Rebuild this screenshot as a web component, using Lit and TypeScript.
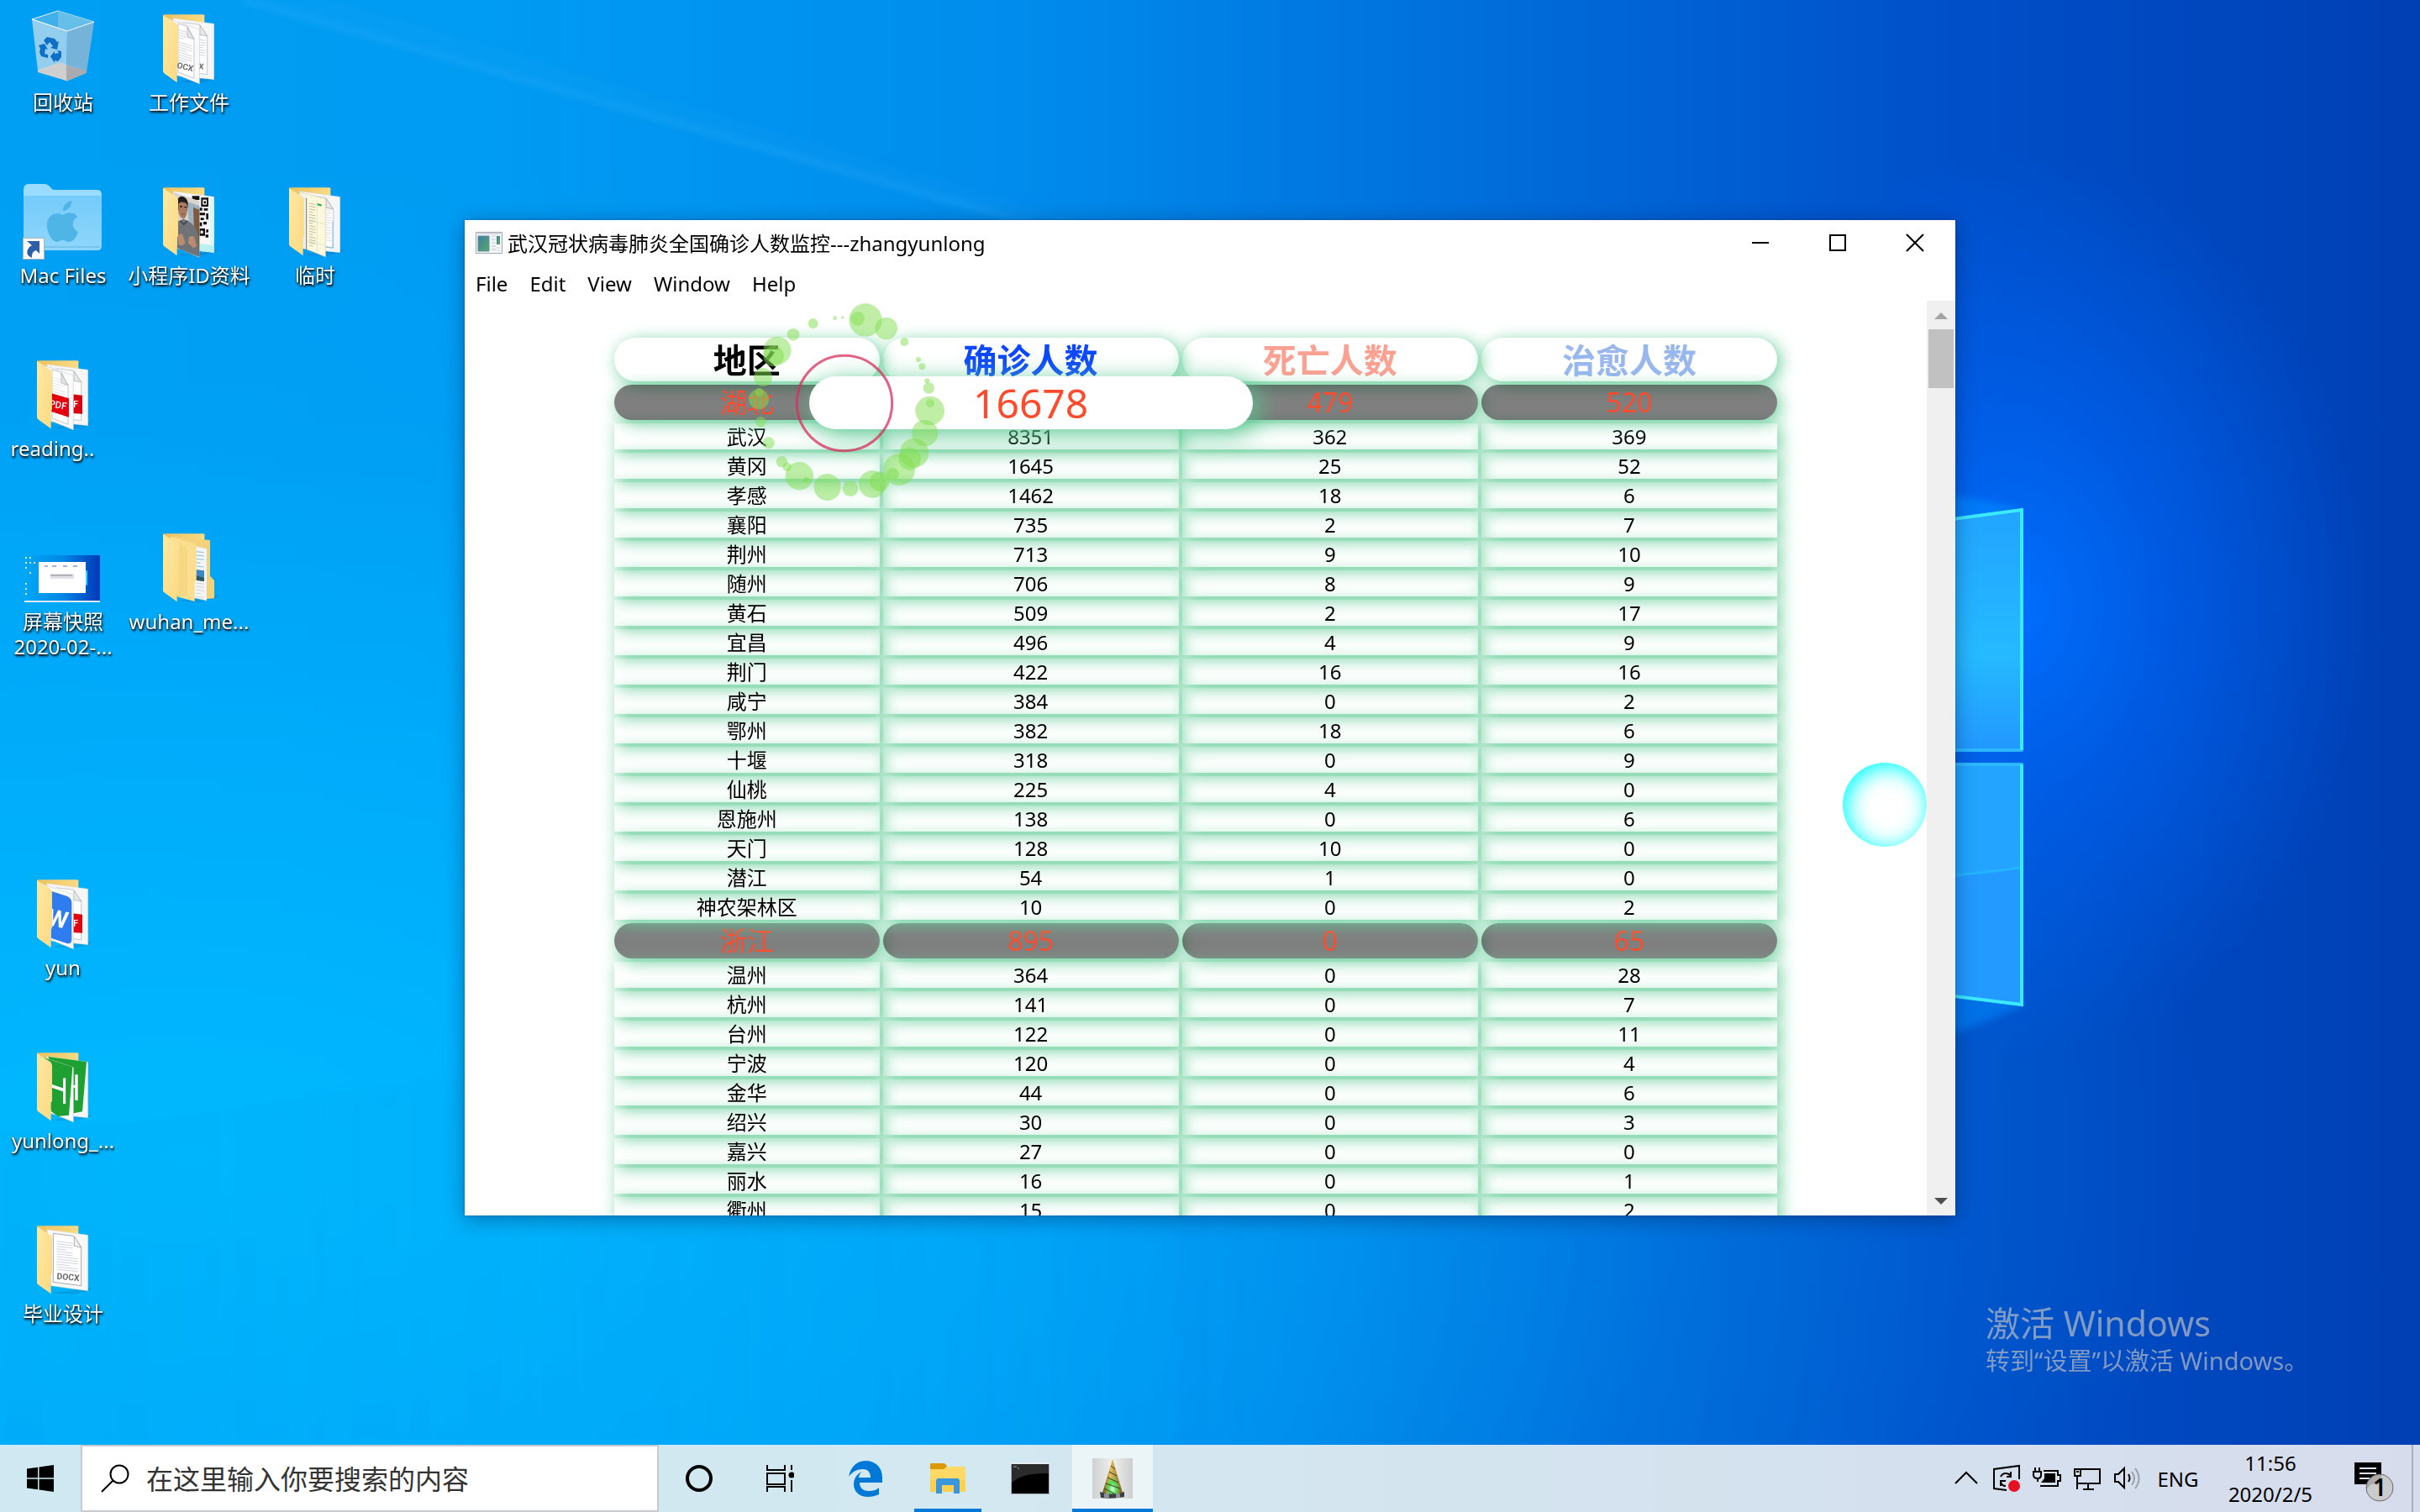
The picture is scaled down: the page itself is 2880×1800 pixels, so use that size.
import { LitElement, html, svg, css, nothing } from "lit";
import { customElement, property } from "lit/decorators.js";

/* ---------- data ---------- */

interface Region {
  name: string;
  counts: [number, number, number];
  summary?: boolean;
  hovered?: boolean;
}

const r = (name: string, a: number, b: number, c: number): Region => ({ name, counts: [a, b, c] });

const REGIONS: Region[] = [
  { name: "湖北", counts: [16678, 479, 520], summary: true, hovered: true },
  r("武汉", 8351, 362, 369),
  r("黄冈", 1645, 25, 52),
  r("孝感", 1462, 18, 6),
  r("襄阳", 735, 2, 7),
  r("荆州", 713, 9, 10),
  r("随州", 706, 8, 9),
  r("黄石", 509, 2, 17),
  r("宜昌", 496, 4, 9),
  r("荆门", 422, 16, 16),
  r("咸宁", 384, 0, 2),
  r("鄂州", 382, 18, 6),
  r("十堰", 318, 0, 9),
  r("仙桃", 225, 4, 0),
  r("恩施州", 138, 0, 6),
  r("天门", 128, 10, 0),
  r("潜江", 54, 1, 0),
  r("神农架林区", 10, 0, 2),
  { name: "浙江", counts: [895, 0, 65], summary: true },
  r("温州", 364, 0, 28),
  r("杭州", 141, 0, 7),
  r("台州", 122, 0, 11),
  r("宁波", 120, 0, 4),
  r("金华", 44, 0, 6),
  r("绍兴", 30, 0, 3),
  r("嘉兴", 27, 0, 0),
  r("丽水", 16, 0, 1),
  r("衢州", 15, 0, 2),
];

interface Shortcut {
  label: string;
  art: string;
  col: number;
  row: number;
}

const SHORTCUTS: Shortcut[] = [
  { label: "回收站", art: "bin", col: 1, row: 1 },
  { label: "工作文件", art: "docx2", col: 2, row: 1 },
  { label: "Mac Files", art: "mac", col: 1, row: 2 },
  { label: "小程序ID资料", art: "photo", col: 2, row: 2 },
  { label: "临时", art: "temp", col: 3, row: 2 },
  { label: "reading..\u00a0\u00a0\u00a0\u00a0", art: "pdf", col: 1, row: 3 },
  { label: "屏幕快照\n2020-02-...", art: "shot", col: 1, row: 4 },
  { label: "wuhan_me...", art: "nested", col: 2, row: 4 },
  { label: "yun", art: "wps", col: 1, row: 6 },
  { label: "yunlong_...", art: "hb", col: 1, row: 7 },
  { label: "毕业设计", art: "docx1", col: 1, row: 8 },
];

/* Particle ring, x / y / radius */
const PARTICLES: [number, number, number][] = [
  [480, 123, 59], [452, 118, 25], [554, 153, 40], [619, 201, 15], [669, 265, 9], [682, 289, 12],
  [700, 340, 9], [706, 366, 20], [710, 447, 52], [711, 420, 15], [692, 527, 47], [654, 598, 52],
  [638, 619, 40], [600, 657, 57], [578, 673, 22], [505, 709, 49], [530, 700, 35], [426, 725, 28],
  [344, 720, 48], [244, 680, 50], [268, 693, 10], [181, 629, 20], [200, 647, 16], [134, 562, 21],
  [106, 487, 19], [99, 406, 36], [101, 380, 15], [114, 327, 33], [165, 232, 50], [152, 252, 37],
  [222, 175, 22], [293, 135, 18], [371, 116, 7], [398, 114, 5],
];

/* ---------- icon art ---------- */

const textLines = (x: number, y: number, n: number, w: number, slope: number, gap = 9, color = "#b9bfd0") =>
  Array.from({ length: n }, (_, i) =>
    svg`<path d="M${x} ${y + i * gap}l${i % 4 === 3 ? w * 0.6 : w} ${i % 4 === 3 ? slope * 0.6 : slope}" stroke=${color} stroke-width="2"/>`);

const backPaper = svg`<path d="M168 293 314 313V512L182 498Z" fill="#f6f6f6" stroke="#d9d9d9" stroke-width="1"/>`;
const frontPaper = svg`<path d="M152 296 262 332V527L182 495Z" fill="#fbfbfb" stroke="#cfcfcf" stroke-width="2"/>`;

const backDoc = svg`
  <path d="M200 308 262 316 290 357V494L240 488" fill="#fff" stroke="#a9b1b6" stroke-width="2"/>
  <path d="M264 318V352L290 357Z" fill="#e9e9e9" stroke="#9aa4a8" stroke-width="2"/>`;
const frontDoc = svg`
  <path d="M186 312 218 322 243 368V508L186 486Z" fill="#fff" stroke="#a9b1b6" stroke-width="2"/>
  <path d="M219 324V360L243 368Z" fill="#e4e4e4" stroke="#9aa4a8" stroke-width="2"/>`;

const folderInner: Record<string, unknown> = {
  docx1: svg`
    <path d="M168 293 314 313V512L182 494Z" fill="#f8f8f8" stroke="#d4d4d4" stroke-width="1"/>
    <path d="M190 307 262 316 290 357V494L190 481Z" fill="#fff" stroke="#a9a9a9" stroke-width="3"/>
    <path d="M265 318V352L290 357Z" fill="#f2f2f2" stroke="#8f8f8f" stroke-width="2"/>
    ${textLines(202, 335, 6, 58, 7)} ${textLines(202, 390, 6, 76, 8)}
    <text class="tag" x="202" y="470" font-size="31" transform="rotate(5 202 470)">DOCX</text>`,
  docx2: svg`
    ${backPaper}${backDoc}
    ${textLines(264, 370, 7, 20, 3)}
    <text class="tag" x="259" y="474" font-size="28" transform="rotate(6 259 474)">X</text>
    ${frontPaper}${frontDoc}
    ${textLines(188, 335, 4, 28, 8)} ${textLines(188, 378, 8, 48, 15)}
    <text class="tag" x="180" y="470" font-size="30" transform="rotate(13 180 470)">OCX</text>`,
  pdf: svg`
    ${backPaper}${backDoc}
    <path d="M258 400 294 404V470L258 468Z" fill="#d9000f"/>
    <text class="tag-light" x="262" y="448" font-size="32">F</text>
    ${frontPaper}${frontDoc}${textLines(188, 340, 7, 48, 13, 10, "#d8d8d8")}
    <path d="M184 397 246 415V482L184 462Z" fill="#e3000f"/>
    <text class="tag-light" x="174" y="444" font-size="34" transform="rotate(10 174 444)">PDF</text>`,
  wps: svg`
    ${backPaper}${backDoc}
    <path d="M258 400 294 404V470L258 468Z" fill="#e3000f"/>
    <text class="tag-light" x="262" y="448" font-size="32">F</text>
    ${frontPaper}
    <path d="M182 320 238 338Q256 345 256 362V492Q256 512 238 507L182 488Z" fill="#2f7bf0"/>
    <text x="164" y="440" font-size="84" font-weight="700" fill="#fff" font-family="Roboto, sans-serif" transform="rotate(12 164 440)">W</text>`,
  hb: svg`
    ${backPaper}
    <path d="M172 294 309 312 294 490 240 500Z" fill="#1ea033"/>
    <path d="M273 358v92M258 400h14" stroke="#fff" stroke-width="10"/>
    ${frontPaper}
    <path d="M152 296 259 331 246 503 206 507 182 488Z" fill="#1ea033"/>
    <path d="M230 370v92" stroke="#fff" stroke-width="9"/><path d="M184 398 230 414" stroke="#fff" stroke-width="11"/>`,
  photo: svg`
    ${backPaper}
    <path d="M262 480 314 486V512L262 506Z" fill="#b9f1f1"/>
    <path d="M300 320h14v160h-14Z" fill="#d8f7f7"/>
    <g fill="#111">
      <path d="M268 316h26v32h-26ZM236 310h26v14h-26Z"/><path d="M262 352h10v10h-10ZM278 354h14v8h-14ZM262 370h20v9h-20ZM286 372h8v22h-8ZM266 388h12v8h-12ZM262 404h9v14h-9ZM276 402h12v10h-12ZM262 426h20v26h-20ZM286 430h8v10h-8ZM284 448h10v10h-10Z"/>
    </g>
    <path d="M274 323h14v18h-14Z" fill="#fff"/><path d="M278 328h7v9h-7Z" fill="#111"/><path d="M266 434h9v10h-9Z" fill="#fff"/>
    <path d="M170 296 262 328V530L182 495Z" fill="#d9d4cc"/>
    <path d="M218 330 262 345V450L226 430Z" fill="#9db3c2"/>
    <path d="M240 350 262 360V520L245 500Z" fill="#7d5a3c"/>
    <path d="M184 325Q188 308 204 312 222 318 221 345L218 362 186 360Z" fill="#231d1a"/>
    <path d="M187 340Q190 330 204 332 220 334 219 350 219 384 206 392 190 388 187 366Z" fill="#a87b60"/>
    <path d="M192 348h9M208 350h9" stroke="#2b1d15" stroke-width="4"/>
    <path d="M197 374q8 3 13 0" stroke="#7d4a3c" stroke-width="3" fill="none"/>
    <path d="M186 400 206 392 222 400Q250 415 256 450L262 528 182 496Z" fill="#6f7377"/>
    <path d="M194 398 206 412 220 398" stroke="#3a3d40" stroke-width="4" fill="none"/>
    <path d="M186 450q14-12 18 4l8 24-12 10-14-6ZM224 458q16-14 22 6l6 26-12 6-18-18Z" fill="#b98c72"/>`,
  temp: svg`
    ${backPaper}${backDoc}${textLines(262, 350, 14, 22, 3, 9, "#c2c8cf")}
    <path d="M248 490 288 496V400" fill="none" stroke="#49a7e8" stroke-width="2"/>
    <path d="M168 296 262 320 262 527 182 495Z" fill="#fdf8dc" stroke="#d5d0b5" stroke-width="2"/>
    <path d="M172 298 196 316V502L182 495Z" fill="#eceff1"/><path d="M194 318V502" stroke="#777" stroke-width="3"/>
    <path d="M232 336 248 340V347L232 343Z" fill="#2fae4c"/>
    <path d="M232 326V514M196 398 262 410M196 470 262 486" stroke="#cfe0c0" stroke-width="2"/>
    ${textLines(204, 336, 16, 22, 5, 10, "#9c9a84")}`,
  nested: svg`
    <path d="M159 290 300 303V431L315 447V511L280 514Z" fill="#f3d27a"/>
    <path d="M236 322 288 334V519L236 508Z" fill="#f4f5f6" stroke="#d8d8d8" stroke-width="1"/>
    ${textLines(250, 344, 5, 28, 3, 13, "#4f9fd8")}
    <path d="M250 408 279 412V450L250 446Z" fill="#3f86c4"/><path d="M250 430 279 438V450L250 446Z" fill="#2c5663"/>
    ${textLines(250, 456, 5, 28, 4, 12, "#b9b9b9")}
    <path d="M159 290 251 317V447L245 453V522L182 505Z" fill="#fbdf8e"/>
    <path d="M190 310 218 335V500L186 505Z" fill="#f0d07c" opacity=".55"/>`,
};

const folderArt = (kind: string) => svg`
  <g transform="translate(0 -76) scale(.33333)" fill="none">
    <path d="M182 520 330 500 314 514 262 524Z" fill="#0a4f80" opacity=".18"/>
    <path d="M132 282 136 280H277L280 283V330L186 420Z" fill="url(#folder-back)"/>
    ${folderInner[kind]}
    <path d="M132 282 180 313Q186 318 186 326V452L182 458V523L135 489 132 484Z" fill="url(#folder-front)"/>
  </g>`;

const binArt = svg`
  <path d="M38 23 69 13 112 26 80 37Z" fill="#3fb0ea" stroke="#e8f4fa" stroke-width="1"/>
  <path d="M69 13 112 26 80 37 69 33Z" fill="#66bfe8"/>
  <path d="M45 83 72 74 103 85 79 96Z" fill="#bfc1c5"/>
  <path d="M38 23 80 37 79 96 45 85Z" fill="#b4d8ee" opacity=".82"/>
  <path d="M80 37 112 26 103 86 79 96Z" fill="#86b6d6" opacity=".88"/>
  <path d="M45 84 70 75 79 78V96L45 86Z" fill="#cfcfd0"/>
  <path d="M79 78 103 84V87L79 97Z" fill="#a9abb0"/>
  <path d="M38 23 80 37 112 26" fill="none" stroke="#eef8fd" stroke-width="1"/>
  <g fill="#0f6fc6">
    <path d="M52 48 56 44 65 46 68 50 70 49 68 59 60 57 63 55 59 50 56 54Z"/>
    <path d="M46 54 53 52 57 59 54 58 53 64 57 65V69L49 67 47 62 48 58Z"/>
    <path d="M60 67 65 61 65 64 70 63 68 60 73 61 73 68 69 73 65 72V75Z"/>
  </g>`;

const macArt = svg`
  <path d="M28 20Q28 13 34 13H53Q56 13 58 15L62 19Q63 20 66 20H116Q121 20 121 26V50H28Z" fill="#9adcff"/>
  <path d="M28 30Q28 27 31 27H118Q121 27 121 30V87Q121 92 116 92H33Q28 92 28 87Z" fill="url(#mac-front)"/>
  <path d="M30 88H119" stroke="#5fb4e4" stroke-width="1"/>
  <path d="M75 50C81 46 88 46 92 52 85 56 85 66 93 70 91 76 87 82 82 82 79 82 78 80 75 80 71 80 70 82 67 82 62 81 56 72 56 62 56 51 65 45 75 50ZM75 45C75 39 79 34 85 33 86 39 81 45 75 45Z" fill="#4fb4e6"/>
  <path d="M27.500 77.500h25v25h-25Z" fill="#fff" stroke="#b4b4b4"/>
  <path d="M32 81H47V96L43 92Q37 94 38 101 30 98 33 91 35 87 38 86Z" fill="#2c5fa8"/>`;

const shotArt = svg`
  <path d="M29 43h90v56H29Z" fill="url(#wall-mini)"/>
  <path d="M46 51h56v37H46Z" fill="#fff"/>
  <path d="M102 62 104 61V79L102 78Z" fill="#3ad3ff"/>
  <path d="M53 56h4M62 56h5M75 56h5M87 56h5" stroke="#4463c8" stroke-width="1"/>
  <path d="M60 65h28v6H60Z" fill="#dfe3e8"/><path d="M60 67h26" stroke="#888" stroke-width="1"/>
  <path d="M29 97h90v2H29Z" fill="#dfeaf2"/>
  <path d="M30 45h2v2h-2ZM35 45h2v2h-2ZM30 51h2v2h-2ZM35 51h2v2h-2ZM40 51h2v2h-2ZM30 57h2v2h-2ZM35 63h2v2h-2ZM30 76h2v2h-2ZM30 82h2v2h-2ZM30 88h2v2h-2Z" fill="#cfe6c9"/>`;

const artFor = (kind: string) =>
  kind === "bin" ? binArt : kind === "mac" ? macArt : kind === "shot" ? shotArt : folderArt(kind);

/* ---------- desktop shortcut ---------- */

@customElement("desktop-shortcut")
export class DesktopShortcut extends LitElement {
  @property() label = "";
  @property() art = "";

  static styles = css`
    .shortcut {
      display: flex;
      flex-direction: column;
      align-items: center;
      gap: 1px;
      width: 100%;
      padding: 10px 0 0;
      border: 0;
      background: none;
      color: #fff;
      font: 24px/30px "Noto Sans", "Noto Sans CJK SC", sans-serif;
      text-shadow: 1px 2px 3px #000, 0 1px 2px rgba(0, 0, 0, 0.7);
      white-space: pre;
    }
    .art { width: 96px; height: 96px; overflow: visible; text-shadow: none; }
    .tag { fill: #6a6a6a; font-family: Roboto, sans-serif; font-weight: 700; }
    .tag-light { fill: #fff; font-family: Roboto, sans-serif; font-weight: 500; }
  `;

  render() {
    return html`<button class="shortcut">
      <svg class="art" viewBox="27 10 96 96" aria-hidden="true">
        <defs>
          <linearGradient id="folder-front" x1="0" y1="0" x2="1" y2="1">
            <stop offset="0" stop-color="#ffe9a6" /><stop offset="1" stop-color="#fbd980" />
          </linearGradient>
          <linearGradient id="folder-back" x1="0" y1="0" x2="1" y2="0">
            <stop offset="0" stop-color="#eac15f" /><stop offset="1" stop-color="#fbdb84" />
          </linearGradient>
          <linearGradient id="mac-front" x1="0" y1="0" x2="0" y2="1">
            <stop offset="0" stop-color="#74cbfa" /><stop offset="1" stop-color="#8fd6fb" />
          </linearGradient>
          <linearGradient id="wall-mini" x1="0" y1="0" x2="1" y2="0">
            <stop offset="0" stop-color="#00a8f5" /><stop offset=".5" stop-color="#0088e6" /><stop offset="1" stop-color="#0038b8" />
          </linearGradient>
        </defs>
        ${artFor(this.art)}
      </svg>
      <span>${this.label}</span>
    </button>`;
  }
}

/* ---------- application window ---------- */

@customElement("monitor-window")
export class MonitorWindow extends LitElement {
  static styles = css`
    :host {
      display: flex;
      flex-direction: column;
      background: #fff;
      color: #000;
      font: 24px/31px "Noto Sans", "Noto Sans CJK SC", sans-serif;
      box-shadow: 0 0 2px rgba(0, 50, 110, 0.5), 0 4px 22px rgba(0, 20, 60, 0.4);
    }
    button { border: 0; padding: 0; background: none; color: inherit; font: inherit; }
    .title-bar { display: flex; align-items: center; height: 54px; padding: 0 2px 0 13px; gap: 6px; }
    .title-icon { width: 32px; height: 26px; }
    .title { flex: 1; margin: 0; font: inherit; }
    .controls { display: flex; align-self: stretch; }
    .control { width: 92px; display: grid; place-items: center; }
    .control svg { width: 22px; height: 22px; }
    .menu { display: flex; height: 42px; }
    .menu button { padding: 0 13px; }
    .body { display: flex; flex: 1; min-height: 0; }
    .view { flex: 1; overflow: hidden; }
    .scrollbar {
      width: 34px;
      display: flex;
      flex-direction: column;
      align-items: center;
      background: #f0f0f0;
    }
    .arrow { width: 34px; height: 34px; display: grid; place-items: center; }
    .arrow svg { width: 18px; height: 9px; }
    .thumb { width: 30px; height: 70px; background: #c1c1c1; }
    .track { flex: 1; }

    table {
      width: 80%;
      margin: 40px auto 0;
      border-collapse: separate;
      border-spacing: 4px;
      table-layout: fixed;
      text-align: center;
      isolation: isolate;
    }
    th, td {
      padding: 0;
      height: 31px;
      font-weight: 400;
      box-shadow: 4px 4px 20px rgb(105, 206, 156);
    }
    thead th { height: 50px; padding-top: 2px; border-radius: 30px; font-size: 40px; line-height: 50px; font-weight: 700; }
    .region { width: 23%; }
    .confirmed { color: #0c48ff; }
    .dead { color: #faa192; }
    .healed { color: #98b7ef; }
    .summary th, .summary td {
      position: relative;
      z-index: -1;
      height: 42px;
      border-radius: 30px;
      background: rgba(0, 0, 0, 0.5);
      color: #ff4b2b;
      font-size: 32px;
      line-height: 42px;
    }
    .summary.hovered th, .summary.hovered td { z-index: auto; }
    .summary td.lifted { background: none; box-shadow: none; z-index: 1; }
    .pill {
      position: absolute;
      inset: -10px -25% -11px;
      display: grid;
      place-items: center;
      border-radius: 40px;
      background: #fff;
      font-size: 48px;
      box-shadow: 6px 6px 30px rgb(90, 200, 146);
    }
    .particles {
      position: absolute;
      left: 317px;
      top: 78px;
      width: 270px;
      height: 270px;
      pointer-events: none;
      z-index: 2;
    }
    .orb {
      position: absolute;
      right: 34px;
      top: 646px;
      width: 100px;
      height: 100px;
      border-radius: 50%;
      box-shadow: inset 4px 4px 26px 1px aqua;
    }
  `;

  private row(region: Region) {
    const cls = region.summary ? (region.hovered ? "summary hovered" : "summary") : "";
    return html`<tr class=${cls || nothing}>
      <th scope="row">${region.name}</th>
      ${region.counts.map((n, i) =>
        region.hovered && i === 0
          ? html`<td class="lifted"><span class="pill">${n}</span></td>`
          : html`<td>${n}</td>`)}
    </tr>`;
  }

  render() {
    return html`
      <header class="title-bar">
        <svg class="title-icon" viewBox="0 0 32 26" aria-hidden="true">
          <defs>
            <linearGradient id="pane" x1="0" y1="0" x2="1" y2="1">
              <stop offset="0" stop-color="#3b7fa6" /><stop offset="1" stop-color="#57a864" />
            </linearGradient>
          </defs>
          <path d="M.5 .5h31v25H.5Z" fill="#f4f5f7" stroke="#a4a8b0" />
          <path d="M2 2h28" stroke="#d4d8e0" stroke-width="2" />
          <path d="M3 5h13v18H3Z" fill="url(#pane)" stroke="#6a8fa0" />
          <path d="M19 5h5M19 9h5M19 13h5M19 17h5M19 21h5" stroke="#c4c6ca" />
          <path d="M25 5h4v10h-4Z" fill="url(#pane)" />
          <path d="M25 19h4M25 22h4" stroke="#d4d6da" />
        </svg>
        <h1 class="title">武汉冠状病毒肺炎全国确诊人数监控---zhangyunlong</h1>
        <div class="controls">
          <button class="control" aria-label="Minimize"><svg viewBox="0 0 22 22"><path d="M1 11h20" stroke="#000" stroke-width="2" /></svg></button>
          <button class="control" aria-label="Maximize"><svg viewBox="0 0 22 22"><path d="M2 2h18v18H2Z" fill="none" stroke="#000" stroke-width="2" /></svg></button>
          <button class="control" aria-label="Close"><svg viewBox="0 0 22 22"><path d="M1 1 21 21M21 1 1 21" stroke="#000" stroke-width="2" /></svg></button>
        </div>
      </header>
      <nav class="menu">
        ${["File", "Edit", "View", "Window", "Help"].map((m) => html`<button>${m}</button>`)}
      </nav>
      <div class="body">
        <div class="view">
          <table>
            <thead>
              <tr>
                <th class="region" scope="col">地区</th>
                <th class="confirmed" scope="col">确诊人数</th>
                <th class="dead" scope="col">死亡人数</th>
                <th class="healed" scope="col">治愈人数</th>
              </tr>
            </thead>
            <tbody>${REGIONS.map((x) => this.row(x))}</tbody>
          </table>
        </div>
        <div class="scrollbar">
          <button class="arrow" aria-label="Scroll up"><svg viewBox="0 0 18 9"><path d="M1 9 9 1 17 9Z" fill="#a3a3a3" /></svg></button>
          <div class="thumb"></div>
          <div class="track"></div>
          <button class="arrow" aria-label="Scroll down"><svg viewBox="0 0 18 9"><path d="M1 0 9 8 17 0Z" fill="#505050" /></svg></button>
        </div>
      </div>
      <div class="orb"></div>
      <svg class="particles" viewBox="0 0 810 810" aria-hidden="true">
        <g fill="rgb(129,221,79)" fill-opacity=".5">
          ${PARTICLES.map(([x, y, rad]) => svg`<circle cx=${x} cy=${y} r=${rad} />`)}
        </g>
        <circle cx="405" cy="420" r="170" fill="none" stroke="#d92e5c" stroke-opacity=".75" stroke-width="9" />
      </svg>
    `;
  }
}

/* ---------- taskbar ---------- */

@customElement("task-bar")
export class TaskBar extends LitElement {
  static styles = css`
    :host {
      display: flex;
      align-items: stretch;
      background: linear-gradient(90deg, #cfe8f2 0%, #d3e8f0 40%, #d4e1ee 75%, #d7dcec 100%);
      color: #000;
      font: 24px/37px "Noto Sans", "Noto Sans CJK SC", sans-serif;
    }
    button { border: 0; padding: 0; background: none; color: inherit; font: inherit; display: grid; place-items: center; }
    .slot { width: 96px; position: relative; }
    .search {
      width: 688px;
      box-sizing: border-box;
      display: flex;
      align-items: center;
      gap: 20px;
      padding: 0 22px;
      border: 2px solid #c8cbcd;
      background: #fff;
    }
    .search svg { width: 34px; height: 34px; flex: none; }
    .search input { flex: 1; min-width: 0; border: 0; padding: 2px 0 0; outline: 0; background: none; font: inherit; font-size: 32px; line-height: 44px; }
    .search input::placeholder { color: #333; opacity: 1; }
    .apps { display: flex; gap: 2px; margin-left: 6px; flex: 1; }
    .open::after, .active::after {
      content: "";
      position: absolute;
      bottom: 0;
      left: 8px;
      right: 8px;
      height: 4px;
      background: #0078d7;
    }
    .active { background: #ebf4f7; }
    .active::after { left: 0; right: 0; }
    .tray { display: flex; align-items: center; }
    .tray button { width: 48px; height: 100%; }
    .tray svg { width: 34px; height: 34px; }
    .tray .lang { width: 72px; }
    .tray .clock { width: 148px; display: block; padding: 3px 0; box-sizing: border-box; }
    .clock time { display: block; }
    .tray .notice { width: 94px; }
    .tray .notice svg { width: 52px; height: 48px; margin: 10px 0 0 6px; }
    .badge { font-size: 28px; }
    .peek { width: 8px; border-left: 2px solid #a9afbd; align-self: stretch; }
  `;

  render() {
    return html`
      <button class="slot" aria-label="Start">
        <svg width="32" height="32" viewBox="0 0 32 32"><path d="M0 4.500 13 2.700V15.200H0ZM14.500 2.500 32 0V15.200H14.500ZM0 16.700H13V29.300L0 27.500ZM14.500 16.700H32V32L14.500 29.500Z" /></svg>
      </button>
      <label class="search">
        <svg viewBox="0 0 34 34" fill="none" stroke="#000" stroke-width="2"><circle cx="22" cy="12" r="10.500" /><path d="M14.500 19.500 1 33" /></svg>
        <input type="text" aria-label="搜索" placeholder="在这里输入你要搜索的内容" />
      </label>
      <button class="slot" aria-label="Cortana">
        <svg width="34" height="34" viewBox="0 0 34 34"><circle cx="17" cy="17" r="14" fill="none" stroke="#000" stroke-width="4" /></svg>
      </button>
      <button class="slot" aria-label="Task view">
        <svg width="34" height="32" viewBox="0 0 34 32" fill="none" stroke="#000" stroke-width="2">
          <path d="M2 0V6H23V0M2 10H23V23H2ZM2 32V26H23V32M31 0V6M31 18V32" /><circle cx="31" cy="12" r="3.500" fill="#000" stroke="none" />
        </svg>
      </button>
      <div class="apps">
        <button class="slot" aria-label="Edge">
          <svg width="42" height="44" viewBox="0 0 42 44">
            <path d="M1 20C3 8 11 1 21 1 33 1 41 9 41 21V27H14C14 34 19 37 25 37 30 37 34 36 37 33V41C33 43 28 44 24 44 13 44 7 37 7 29 7 22 11 17 16 14 14 17 13 19 13 21H27C27 15 24 11 18 11 11 11 5 14 1 20Z" fill="#0078d7" />
          </svg>
        </button>
        <button class="slot open" aria-label="文件资源管理器">
          <svg width="42" height="36" viewBox="0 0 42 36">
            <path d="M0 1Q0 0 1 0H17L20 3 17 8H0Z" fill="#dd9a00" />
            <path d="M0 7H16L20 4H41Q42 4 42 5V34H0Z" fill="#ffd966" /><path d="M0 20H42V34H0Z" fill="#ffc83d" opacity=".6" />
            <path d="M7 36V21Q7 18 10 18H32Q35 18 35 21V36H28V26H14V36Z" fill="#3a96dd" />
          </svg>
        </button>
        <button class="slot" aria-label="命令提示符">
          <svg width="46" height="38" viewBox="0 0 46 38">
            <path d="M0 0H46V38H0Z" fill="#a9b2b8" /><path d="M0 0H46V2H0Z" fill="#e8ecee" /><path d="M1 2H45V37H1Z" fill="#000" />
            <path d="M1 2H45V13Q14 12 1 24Z" fill="#2b2b2b" /><path d="M3 5h4M8 7h2" stroke="#aaa" stroke-width="1" />
          </svg>
        </button>
        <button class="slot active" aria-label="zhangyunlong">
          <svg width="48" height="48" viewBox="0 0 48 48">
            <defs>
              <linearGradient id="cone" x1="0" x2="1"><stop offset="0" stop-color="#6b5523" /><stop offset=".4" stop-color="#e3be5a" /><stop offset="1" stop-color="#7a6028" /></linearGradient>
              <radialGradient id="glow" cx=".5" cy=".84" r=".36"><stop offset="0" stop-color="#e4ffe4" /><stop offset=".5" stop-color="#4fe258" /><stop offset="1" stop-color="#3fe04a" stop-opacity="0" /></radialGradient>
              <linearGradient id="tile" x1="0" x2="1"><stop offset="0" stop-color="#cfd0d2" /><stop offset=".5" stop-color="#efefec" /><stop offset="1" stop-color="#cdced0" /></linearGradient>
            </defs>
            <path d="M0 0H48V48H0Z" fill="url(#tile)" />
            <path d="M24 1 36 41Q24 46 12 41Z" fill="url(#cone)" /><path d="M24 1 36 41Q24 46 12 41Z" fill="url(#glow)" />
            <path d="M22 9 27 13M20 16 29 21M18 23 31 29M16 30 33 36M14 36 26 42" stroke="#3a3315" stroke-width="1" />
            <path d="M9 40Q24 45 38 40V46Q24 49 10 47Z" fill="#3b3f42" /><path d="M14 42h6v5h-6ZM28 42h5v5h-5Z" fill="#8c9296" />
          </svg>
        </button>
      </div>
      <div class="tray">
        <button aria-label="显示隐藏的图标"><svg viewBox="0 0 34 34" fill="none" stroke="#000" stroke-width="2"><path d="M4 23 17 10 30 23" /></svg></button>
        <button aria-label="更新">
          <svg viewBox="0 0 34 34" fill="none" stroke="#000" stroke-width="2">
            <path d="M17 31 2 29V6L32 2V18" /><path d="M10 15Q13 9 20 12L22 15M22 9V15H17M16 26Q11 26 10 21M10 26V20H16" />
            <circle cx="26" cy="26" r="7" fill="#e81123" stroke="none" />
          </svg>
        </button>
        <button aria-label="电源">
          <svg viewBox="0 0 34 34" fill="none" stroke="#000" stroke-width="2">
            <path d="M3 4V9M8 4V9M1 9H10V13Q10 17 6 17 1 17 1 13ZM6 17V21M13 8H30V13H33V20H30V26H9" /><path d="M14 11H27V22H10L14 17Z" fill="#000" stroke="none" />
          </svg>
        </button>
        <button aria-label="网络">
          <svg viewBox="0 0 34 34" fill="none" stroke="#000" stroke-width="2">
            <path d="M10 6H32V23H6M18 23V29M12 30H25" /><path d="M2 6H9V14H2ZM5 14V30M4 9h3" />
          </svg>
        </button>
        <button aria-label="音量">
          <svg viewBox="0 0 34 34" fill="none" stroke="#000" stroke-width="2">
            <path d="M2 12H6L13 5V28L6 21H2Z" /><path d="M18 12Q21 17 18 21" />
            <g stroke="#9aa0ab"><path d="M22 9Q28 17 22 25M26 5Q35 17 26 29" /></g>
          </svg>
        </button>
        <button class="lang">ENG</button>
        <button class="clock"><time>11:56</time><time>2020/2/5</time></button>
        <button class="notice" aria-label="通知">
          <svg viewBox="0 0 52 48">
            <path d="M2 0H34V26H22L16 32V26H2Z" /><path d="M8 7H28M8 13H28M8 19H20" stroke="#dce2ee" stroke-width="2" />
            <circle cx="32" cy="30" r="16" fill="#c8c8c8" fill-opacity=".85" stroke="#666" />
            <text class="badge" x="32" y="40" text-anchor="middle" font-weight="600">1</text>
          </svg>
        </button>
        <div class="peek"></div>
      </div>
    `;
  }
}

/* ---------- page ---------- */

@customElement("app-root")
export class AppRoot extends LitElement {
  static styles = css`
    :host {
      display: grid;
      grid-template-rows: 1fr 80px;
      height: 100vh;
      overflow: hidden;
      font-family: "Noto Sans", "Noto Sans CJK SC", sans-serif;
    }
    .desktop {
      position: relative;
      min-height: 0;
      background:
        radial-gradient(ellipse 420px 540px at 2400px 720px, rgba(0, 112, 255, 0.95), rgba(0, 106, 255, 0.55) 40%, rgba(0, 100, 255, 0) 100%),
        radial-gradient(ellipse 2400px 1200px at 8% 80%, rgba(0, 188, 255, 0.9), rgba(0, 180, 255, 0.65) 40%, rgba(0, 170, 250, 0.2) 75%, rgba(0, 160, 245, 0) 100%),
        linear-gradient(90deg, #009ff3 0%, #009bf3 20%, #008cec 42%, #0070dc 60%, #0050ca 80%, #003fb4 100%);
    }
    .wallpaper { position: absolute; inset: 0; width: 100%; height: 100%; }
    .shortcuts {
      position: relative;
      display: grid;
      grid-template-columns: repeat(auto-fill, 150px);
      grid-auto-rows: 206px;
    }
    .monitor { position: absolute; left: 553px; right: 553px; top: 262px; bottom: 273px; }
    .watermark { position: absolute; right: 120px; bottom: 80px; width: 397px; color: rgba(178, 184, 196, 0.72); }
    .watermark p { margin: 0; white-space: nowrap; font-size: 29px; line-height: 40px; }
    .watermark .head { font-size: 41px; line-height: 50px; }
  `;

  render() {
    return html`
      <main class="desktop">
        <svg class="wallpaper" viewBox="0 0 2880 1720" preserveAspectRatio="xMaxYMid slice" aria-hidden="true">
          <defs>
            <linearGradient id="glass" x1="0" y1="0" x2="0" y2="1">
              <stop offset="0" stop-color="#22a4ff" /><stop offset=".6" stop-color="#25baff" /><stop offset="1" stop-color="#2297ff" />
            </linearGradient>
            <linearGradient id="floor" x1="0" y1="0" x2="1" y2="0">
              <stop offset="0" stop-color="#009be8" stop-opacity=".14" /><stop offset="1" stop-color="#009be8" stop-opacity="0" />
            </linearGradient>
            <filter id="soft" x="-5%" y="-20%" width="110%" height="140%"><feGaussianBlur stdDeviation="4" /></filter>
          </defs>
          <g filter="url(#soft)">
            <path d="M290 0 1230 268 1300 268 400 0Z" fill="#49b8ff" opacity=".06" />
            <path d="M290 0 1230 268" stroke="#3fb6ff" stroke-width="5" opacity=".35" />
            <path d="M0 1355 1500 1155V1720H0Z" fill="url(#floor)" />
            <path d="M2300 990 2408 1198 2300 1240Z" fill="#0a8bff" opacity=".5" />
            <path d="M2300 585 2408 605 2300 640Z" fill="#0a8bff" opacity=".6" />
          </g>
          <path d="M2000 660 2408 605V895H2000Z" fill="url(#glass)" />
          <path d="M2000 908H2408V1198L2000 1146Z" fill="#229aff" />
          <path d="M2000 908H2408V1033L2000 1080Z" fill="#22a8ff" opacity=".7" />
          <g fill="none" stroke-width="4">
            <path d="M2000 1080 2406 1033" stroke="#25b4ff" stroke-width="3" />
            <path d="M2000 893H2406M2000 910H2406" stroke="#2bb8ff" />
            <path d="M2000 661 2406 607V893M2406 910V1196L2000 1145" stroke="#3beaff" />
          </g>
        </svg>
        <div class="shortcuts">
          ${SHORTCUTS.map(
            (s) => html`<desktop-shortcut style="grid-area: ${s.row} / ${s.col}" .label=${s.label} .art=${s.art}></desktop-shortcut>`)}
        </div>
        <monitor-window class="monitor"></monitor-window>
        <div class="watermark">
          <p class="head">激活 Windows</p>
          <p>转到“设置”以激活 Windows。</p>
        </div>
      </main>
      <task-bar></task-bar>
    `;
  }
}
